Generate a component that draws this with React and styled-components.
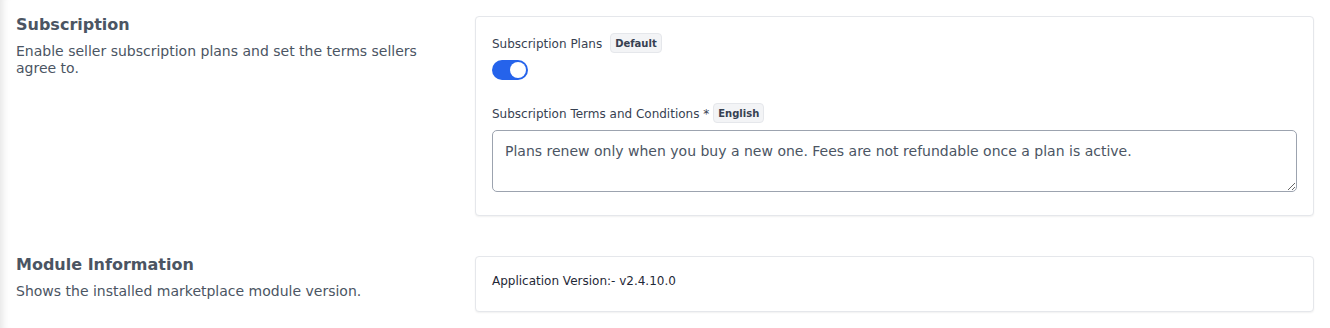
import React from "react";
import styled, { createGlobalStyle } from "styled-components";

const Global = createGlobalStyle`
  html, body { margin: 0; padding: 0; background: #ffffff; }
  body { font-family: "DejaVu Sans", "Liberation Sans", sans-serif; }
  * { box-sizing: border-box; }
`;

const Page = styled.div`
  min-height: 328px;
  padding: 16px;
  background: #fff;
  box-shadow: inset 10px 0 8px -8px rgba(0, 0, 0, 0.12);
  display: flex;
  flex-direction: column;
  gap: 40px;
`;

const Section = styled.section`
  display: grid;
  grid-template-columns: 443px 1fr;
  column-gap: 16px;
  align-items: start;
`;

const Intro = styled.div`
  display: flex;
  flex-direction: column;
  padding-right: 20px;
`;

const Heading = styled.h2`
  margin: 0;
  font-size: 16px;
  line-height: 18px;
  font-weight: 700;
  color: #4b5563;
`;

const Description = styled.p`
  margin: 9px 0 0;
  font-size: 14px;
  line-height: 17px;
  color: #4b5563;
`;

const Card = styled.div`
  background: #fff;
  border: 1px solid #e5e7eb;
  border-radius: 4px;
  box-shadow: 0 1px 2px rgba(0, 0, 0, 0.06);
  padding: ${(p) => p.$pad || "16px 16px 23px"};
  display: flex;
  flex-direction: column;
`;

const LabelRow = styled.div`
  display: flex;
  align-items: center;
  gap: ${(p) => p.$gap || 8}px;
  height: 20px;
`;

const Label = styled.span`
  font-size: 12px;
  line-height: 14px;
  padding-top: 2px;
  color: #374151;
`;

const Badge = styled.span`
  display: inline-flex;
  align-items: center;
  height: 20px;
  padding: 0 4px;
  font-size: 10px;
  font-weight: 700;
  color: #374151;
  background: #f3f4f6;
  border: 1px solid #e5e7eb;
  border-radius: 4px;
`;

const Toggle = styled.span`
  position: relative;
  display: block;
  width: 36px;
  height: 20px;
  border-radius: 10px;
  background: ${(p) => (p.$on ? "#2563eb" : "#d1d5db")};
  margin-top: 7px;
  &::after {
    content: "";
    position: absolute;
    top: 2px;
    left: ${(p) => (p.$on ? "18px" : "2px")};
    width: 16px;
    height: 16px;
    border-radius: 50%;
    background: #fff;
  }
`;

const Field = styled.div`
  margin-top: ${(p) => p.$top || 0}px;
  display: flex;
  flex-direction: column;
`;

const TextArea = styled.textarea`
  margin-top: 7px;
  width: 100%;
  height: 62px;
  padding: 10px 12px;
  font-family: "DejaVu Sans", "Liberation Sans", sans-serif;
  font-size: 14px;
  line-height: 20px;
  color: #4b5563;
  border: 1px solid #9ca3af;
  border-radius: 5px;
  background: #fff;
  resize: vertical;
  outline: none;
`;

const Info = styled.span`
  font-size: 12px;
  line-height: 15px;
  color: #1f2937;
`;

export default function App() {
  return (
    <>
      <Global />
      <Page>
        <Section>
          <Intro>
            <Heading>Subscription</Heading>
            <Description>
              Enable seller subscription plans and set the terms sellers agree to.
            </Description>
          </Intro>
          <Card>
            <LabelRow>
              <Label>Subscription Plans</Label>
              <Badge>Default</Badge>
            </LabelRow>
            <Toggle $on />
            <Field $top={23}>
              <LabelRow $gap={4}>
                <Label>Subscription Terms and Conditions *</Label>
                <Badge>English</Badge>
              </LabelRow>
              <TextArea
                defaultValue="Plans renew only when you buy a new one. Fees are not refundable once a plan is active."
              />
            </Field>
          </Card>
        </Section>
        <Section>
          <Intro>
            <Heading>Module Information</Heading>
            <Description>Shows the installed marketplace module version.</Description>
          </Intro>
          <Card $pad="17px 16px 22px">
            <Info>Application Version:- v2.4.10.0</Info>
          </Card>
        </Section>
      </Page>
    </>
  );
}
